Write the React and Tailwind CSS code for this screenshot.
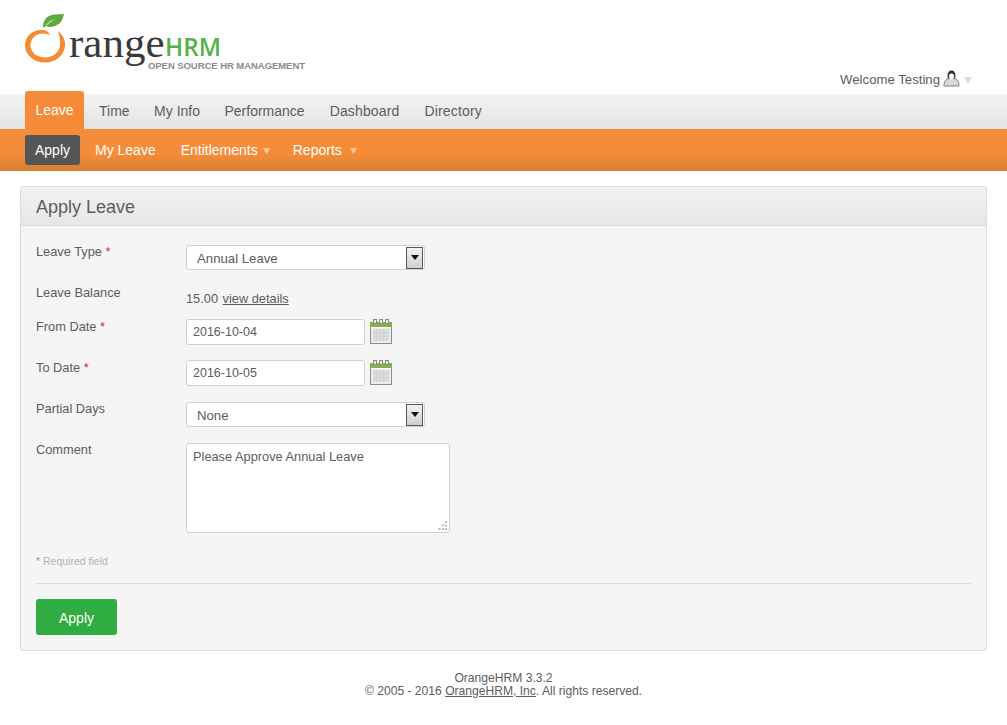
import React from "react";

function Logo() {
  return (
    <svg width="300" height="70" viewBox="0 0 300 70" className="block">
      <path d="M36 21 C41 25 43.500 30 43 36 C42 46 33 52.500 23 52.500 C12 52.500 3 45 3 35.500 C3 26 11 19.500 20 20 C24 20 27 22 28 25 C25 24 23 23.500 20 23.500 C14 23.500 8.500 29 8.500 35.500 C8.500 42.500 15 47.500 23 47.500 C31 47.500 37.500 42.500 38 35 C38.500 29 37 25 36 21Z" fill="#f58b35" />
      <path d="M21 17 C21 9 26 5 33 4.500 L42 4 C41 9 39 14 33 16 C29 17.500 26 17 24 16 C27 13 30 10.500 34 8.500 C29 10 25 13 22.500 17.500 Z" fill="#5eaa3c" />
      <text x="47" y="47" fontFamily="'Liberation Serif', serif" fontSize="43" fill="#3a3a3a">range</text>
      <text x="143" y="46" fontFamily="'Open Sans', sans-serif" fontSize="26" fontWeight="600" fill="#57b04b" textLength="56" lengthAdjust="spacingAndGlyphs">HRM</text>
      <text x="126" y="59" fontFamily="'Liberation Sans', sans-serif" fontSize="9.500" fontWeight="700" fill="#8c8c8c" textLength="157" lengthAdjust="spacing">OPEN SOURCE HR MANAGEMENT</text>
    </svg>
  );
}

function Caret({ wide }) {
  return (
    <svg width="7" height="6" viewBox="0 0 7 6" className={`${wide ? "ml-[8px]" : "ml-[5px]"} mt-[1px]`}>
      <path d="M0 0h7L3.500 6z" fill="#f9c79d" />
    </svg>
  );
}

function Label({ children, req, up }) {
  return (
    <div className={`w-[150px] shrink-0 text-[#5c5c5c] text-[12.800px] ${up ? "-mt-px" : ""}`}>
      {children}
      {req ? <span className="text-[#c0392b]"> *</span> : null}
    </div>
  );
}

function SelectBox({ value }) {
  return (
    <div className="w-[239px] h-[25px] bg-white border border-[#d0d0d0] rounded-[3px] flex items-center justify-between pl-[10px] pr-px text-[#5c5c5c] text-[13.200px]">
      <span className="pt-[2px]">{value}</span>
      <span className="w-[17px] h-[22px] border border-[#555] bg-gradient-to-b from-[#f2f2f2] to-[#cfcfcf] flex items-center justify-center">
        <svg width="8" height="5" viewBox="0 0 8 5"><path d="M0 0h8L4 5z" fill="#111" /></svg>
      </span>
    </div>
  );
}

function CalIcon() {
  return (
    <svg width="22" height="25" viewBox="0 0 22 25" className="ml-[5px] mt-[-1px] shrink-0">
      <rect x="0.500" y="4" width="21" height="20.500" fill="#ececec" stroke="#8c8c8c" />
      <rect x="0" y="3" width="22" height="5" fill="#86b04a" />
      <rect x="1" y="8" width="20" height="1" fill="#fff" />
      <rect x="3" y="10" width="16" height="12" fill="#dcdcdc" />
      <path d="M6.500 10v12M10 10v12M13.500 10v12M3 13.500h16M3 17.500h16" stroke="#d0d0d0" strokeWidth="1" />
      <rect x="3.500" y="0.500" width="3" height="4" fill="#eee" stroke="#888" />
      <rect x="9.500" y="0.500" width="3" height="4" fill="#eee" stroke="#888" />
      <rect x="15.500" y="0.500" width="3" height="4" fill="#eee" stroke="#888" />
    </svg>
  );
}

function DateField({ value }) {
  return (
    <div className="flex items-center">
      <input
        readOnly
        value={value}
        className="w-[179px] h-[26px] bg-white border border-[#d0d0d0] rounded-[3px] px-[6px] text-[#5c5c5c] text-[12.500px] outline-none"
      />
      <CalIcon />
    </div>
  );
}

export default function App() {
  return (
    <div className="min-h-[725px] bg-white text-[13px] leading-[16px]" style={{ fontFamily: "'Liberation Sans', Arial, sans-serif" }}>
      <header className="h-[94px] relative">
        <div className="pt-[10px] pl-[22px]"><Logo /></div>
        <div className="absolute right-[35px] top-[72px] flex items-center text-[13.200px] text-[#5c5c5c]">
          <span>Welcome Testing</span>
          <svg width="17" height="17" viewBox="0 0 17 17" className="ml-[3px] mt-[-3px]">
            <path d="M1 16 C1 11 3 9 6 8.500 H11 C14 9 16 11 16 16 Z" fill="#d8d8d8" stroke="#808080" />
            <path d="M4.500 7 C4.500 2 6 0.500 8.500 0.500 C11 0.500 12.500 2 12.500 7 L11 9 H6 Z" fill="#333" />
            <ellipse cx="8.500" cy="6.500" rx="2.500" ry="3" fill="#fff" />
          </svg>
          <svg width="8" height="7" viewBox="0 0 8 7" className="ml-[4px] mt-[1px]"><path d="M0 0h8L4 7z" fill="#dcdcdc" /></svg>
        </div>
      </header>

      <nav className="h-[35px] bg-gradient-to-b from-[#f3f3f3] to-[#e4e4e4] pl-[25px] flex items-end text-[14px] text-[#5c5c5c]">
        <a className="h-[38px] w-[59px] bg-[#f58b38] text-white rounded-t-[3px] flex items-center justify-center">Leave</a>
        <a className="ml-[15px] h-[35px] pb-[2px] flex items-center">Time</a>
        <a className="ml-[24.500px] h-[35px] pb-[2px] flex items-center">My Info</a>
        <a className="ml-[24.500px] h-[35px] pb-[2px] flex items-center">Performance</a>
        <a className="ml-[25px] h-[35px] pb-[2px] flex items-center tracking-[0.150px]">Dashboard</a>
        <a className="ml-[25px] h-[35px] pb-[2px] flex items-center tracking-[0.150px]">Directory</a>
      </nav>

      <nav className="h-[42px] bg-gradient-to-b from-[#f58c39] from-60% to-[#d97f34] pl-[25px] flex items-start pt-[6px] text-[14px] text-white">
        <a className="w-[55px] h-[30px] bg-[#555658] rounded-[3px] flex items-center justify-center">Apply</a>
        <a className="ml-[15px] h-[30px] flex items-center">My Leave</a>
        <a className="ml-[25px] h-[30px] flex items-center">Entitlements<Caret /></a>
        <a className="ml-[23px] h-[30px] flex items-center">Reports<Caret wide /></a>
      </nav>

      <main className="mt-[15px] mx-[20px] h-[465px] bg-[#f5f5f5] border border-[#dcdcdc] rounded-[3px]">
        <div className="h-[39px] border-b border-[#dcdcdc] bg-gradient-to-b from-[#f1f1f1] to-[#e7e7e7] rounded-t-[3px] pl-[15px] pt-[2px] flex items-center text-[18px] text-[#5c5c5c]">
          Apply Leave
        </div>
        <div className="px-[15px] pt-[19px]">
          <div className="flex h-[25px]"><Label req up>Leave Type</Label><SelectBox value="Annual Leave" /></div>
          <div className="flex mt-[15px] h-[20px]"><Label>Leave Balance</Label>
            <div className="text-[#5c5c5c] pt-[6px] text-[12.800px]">15.00 <span className="underline ml-[1px]">view details</span></div>
          </div>
          <div className="flex mt-[14px] h-[26px]"><Label req>From Date</Label><DateField value="2016-10-04" /></div>
          <div className="flex mt-[15px] h-[26px]"><Label req>To Date</Label><DateField value="2016-10-05" /></div>
          <div className="flex mt-[16px] h-[25px]"><Label up>Partial Days</Label><SelectBox value="None" /></div>
          <div className="flex mt-[16px] h-[90px]"><Label up>Comment</Label>
            <div className="relative w-[264px] h-[90px]">
              <textarea
                readOnly
                value="Please Approve Annual Leave"
                className="w-full h-full bg-white border border-[#d0d0d0] rounded-[3px] px-[6px] py-[5px] text-[#5c5c5c] text-[12.800px] leading-[16px] resize-none outline-none block"
              />
              <svg width="12" height="12" viewBox="0 0 12 12" className="absolute right-px bottom-px">
                <path d="M8 1h2v2H8zM5 4.500h2v2H5zM8 4.500h2v2H8zM1.500 8h2v2h-2zM5 8h2v2H5zM8 8h2v2H8z" fill="#bbb" />
              </svg>
            </div>
          </div>
          <div className="mt-[21px] text-[10.500px] leading-[14px] text-[#b3b3b3]"><span className="text-[#c98a5a]">*</span> Required field</div>
          <div className="mt-[15px] border-t border-[#dcdcdc]" />
          <button className="mt-[15px] w-[81px] h-[36px] pt-[2px] bg-[#2fad40] text-white rounded-[3px] text-[14px] flex items-center justify-center">Apply</button>
        </div>
      </main>

      <footer className="mt-[20px] pt-[1px] text-center text-[12.100px] leading-[13px] text-[#5c5c5c]">
        <div>OrangeHRM 3.3.2</div>
        <div>© 2005 - 2016 <span className="underline">OrangeHRM, Inc</span>. All rights reserved.</div>
      </footer>
    </div>
  );
}
